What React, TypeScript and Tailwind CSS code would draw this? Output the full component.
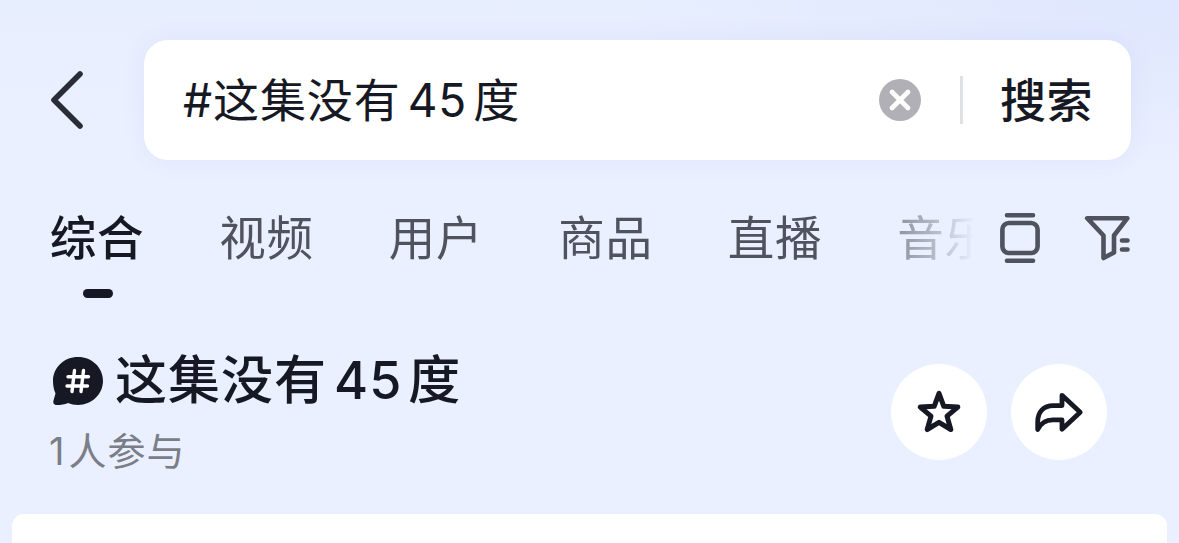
import { useState } from 'react';
import clsx from 'clsx';

interface TopicTextProps {
  before: string;
  number: string;
  after: string;
  className: string;
  numberClassName: string;
}

const tabs = [
  { id: 'general', label: '综合' },
  { id: 'video', label: '视频' },
  { id: 'user', label: '用户' },
  { id: 'goods', label: '商品' },
  { id: 'live', label: '直播' },
  { id: 'music', label: '音乐' },
];

export default function App() {
  const [activeTab, setActiveTab] = useState('general');

  return (
    <div className="flex h-[543px] w-[1179px] flex-col overflow-hidden bg-[#eaf0ff] bg-[radial-gradient(ellipse_560px_170px_at_100%_0%,#dfe7fe_0%,rgba(226,233,254,0.7)_50%,transparent_100%),linear-gradient(180deg,#e7eefe_0px,#eaf0ff_130px)] font-['Inter','Noto_Sans_CJK_SC',sans-serif] text-[#161823]">
      <SearchBar />
      <nav className="mt-[45px] flex h-[95px] items-start pl-[49.5px]">
        <div className="flex w-[925.5px] gap-[74.5px] overflow-hidden [mask-image:linear-gradient(90deg,#000_780px,rgba(0,0,0,0.5)_860px,rgba(0,0,0,0.3)_890px,transparent_925px)]">
          {tabs.map((tab) => (
            <button
              key={tab.id}
              onClick={() => setActiveTab(tab.id)}
              className={clsx(
                'flex w-[95px] flex-none flex-col items-center whitespace-nowrap text-[46.5px] leading-[66px] tracking-[0.8px]',
                activeTab === tab.id ? 'font-medium' : 'text-[#50525e]'
              )}
            >
              {tab.label}
              {activeTab === tab.id && <span className="mt-[18px] ml-0.5 h-[9px] w-[30px] rounded-full bg-[#161823]" />}
            </button>
          ))}
        </div>
        <button className="mt-[5px] ml-[22px]" aria-label="布局">
          <LayoutIcon />
        </button>
        <button className="mt-[5px] ml-10" aria-label="筛选">
          <FilterIcon />
        </button>
      </nav>
      <TopicHeader />
      <div className="mx-3 h-[29px] rounded-t-xl bg-white" />
    </div>
  );
}

function SearchBar() {
  return (
    <header className="mt-10 flex h-[120px] flex-none items-center">
      <button className="ml-[46px]" aria-label="返回">
        <svg width="42" height="64" viewBox="0 0 42 64" fill="none" stroke="#2a2c37" strokeWidth="5.6" strokeLinecap="round" strokeLinejoin="round">
          <path d="M34 6 8 32l26 26" />
        </svg>
      </button>
      <div className="ml-14 flex h-[120px] w-[987px] items-center rounded-3xl bg-white pl-[39px] shadow-[0_0_24px_rgba(80,100,170,0.07)]">
        <div className="flex-1 text-[46px] leading-[66px]">
          <TopicText before="#这集没有" number="45" after="度" className="tracking-[0.9px]" numberClassName="ml-[7px] mr-[6px]" />
        </div>
        <button className="mr-[39px] flex size-[42px] items-center justify-center rounded-full bg-[#b0b0b6]" aria-label="清除">
          <svg width="22" height="22" viewBox="0 0 22 22" stroke="#fff" strokeWidth="4.6" strokeLinecap="round">
            <path d="m3 3 16 16M19 3 3 19" />
          </svg>
        </button>
        <div className="h-12 w-[3px] bg-[#e0e1e3]" />
        <button className="mr-[38px] ml-[37px] text-[46px] leading-[66px] font-medium tracking-[0.5px]">搜索</button>
      </div>
    </header>
  );
}

function TopicHeader() {
  return (
    <section className="flex h-[214px] flex-none items-start justify-between pr-[72px] pl-[49px]">
      <div>
        <div className="mt-[43px] flex h-[76px] items-center">
          <TopicIcon />
          <h1 className="ml-[11px] text-[52px] leading-[76px] font-medium">
            <TopicText before="这集没有" number="45" after="度" className="tracking-[1px]" numberClassName="ml-[7px] mr-[6px]" />
          </h1>
        </div>
        <p className="mt-1 flex text-[38px] leading-[56px] tracking-[1px] text-[#7b7d87]">
          <span className="mr-[3px]">1</span>
          <span>人参与</span>
        </p>
      </div>
      <div className="mt-16 flex gap-6">
        <button className="flex size-24 items-center justify-center rounded-full bg-white" aria-label="收藏">
          <StarIcon />
        </button>
        <button className="flex size-24 items-center justify-center rounded-full bg-white" aria-label="分享">
          <ShareIcon />
        </button>
      </div>
    </section>
  );
}

// Numbers sit a little apart from the characters around them
function TopicText({ before, number, after, className, numberClassName }: TopicTextProps) {
  return (
    <span className={clsx('flex whitespace-nowrap', className)}>
      <span>{before}</span>
      <span className={numberClassName}>{number}</span>
      <span>{after}</span>
    </span>
  );
}

const LayoutIcon = () => (
  <svg width="46" height="60" viewBox="0 0 46 60" fill="none" stroke="#50525e" strokeWidth="4.6" strokeLinecap="round">
    <path d="M10 5.300h26M10 50.700h26" />
    <rect x="5.400" y="13" width="35.200" height="30" rx="6.500" />
  </svg>
);

const FilterIcon = () => (
  <svg width="50" height="60" viewBox="0 0 50 60" fill="none" stroke="#50525e" strokeWidth="4.6" strokeLinecap="round" strokeLinejoin="round">
    <path d="M4.200 8.200h40.200L31 25.500v17l-10.500 5.500V25.500z" />
    <path d="M39 30.500h5.500M39 39.500h5.500" />
  </svg>
);

const TopicIcon = () => (
  <svg width="55" height="50" viewBox="0 0 55 50" fill="none">
    <path
      d="M29 1C43 1 54 11.500 54 24.800S43 49 29 49c-4 0-7-.8-10-2-3 1.400-7.500 2-11 2-3 0-4.300-1.800-3.500-4.500L6.500 37.500C4.800 33.500 4 29.500 4 25 4 11.500 15 1 29 1Z"
      fill="#161823"
    />
    <path d="M25.500 14.500 23 35.500M34.500 14.500 32 35.500M19 20.800h20.500M18 30h20.500" stroke="#fff" strokeWidth="3.400" strokeLinecap="round" />
  </svg>
);

const StarIcon = () => (
  <svg width="48" height="48" viewBox="0 0 48 48" fill="none" stroke="#161823" strokeWidth="5" strokeLinejoin="round">
    <path d="m24 5.300 4.800 13 14 .8-10.800 9 3.800 13.400L24 34.400l-11.800 7.100L16 28.100l-10.800-9 14-.8z" />
  </svg>
);

const ShareIcon = () => (
  <svg width="52" height="48" viewBox="0 0 52 48" fill="none" stroke="#161823" strokeWidth="4.800" strokeLinejoin="round">
    <path d="M29 7.300 47.200 24.300 29 41.200V31.800H20C12 31.800 7.500 35.500 4.700 41.500V34C4.700 23.500 11 17.600 20 17.600h9z" />
  </svg>
);
